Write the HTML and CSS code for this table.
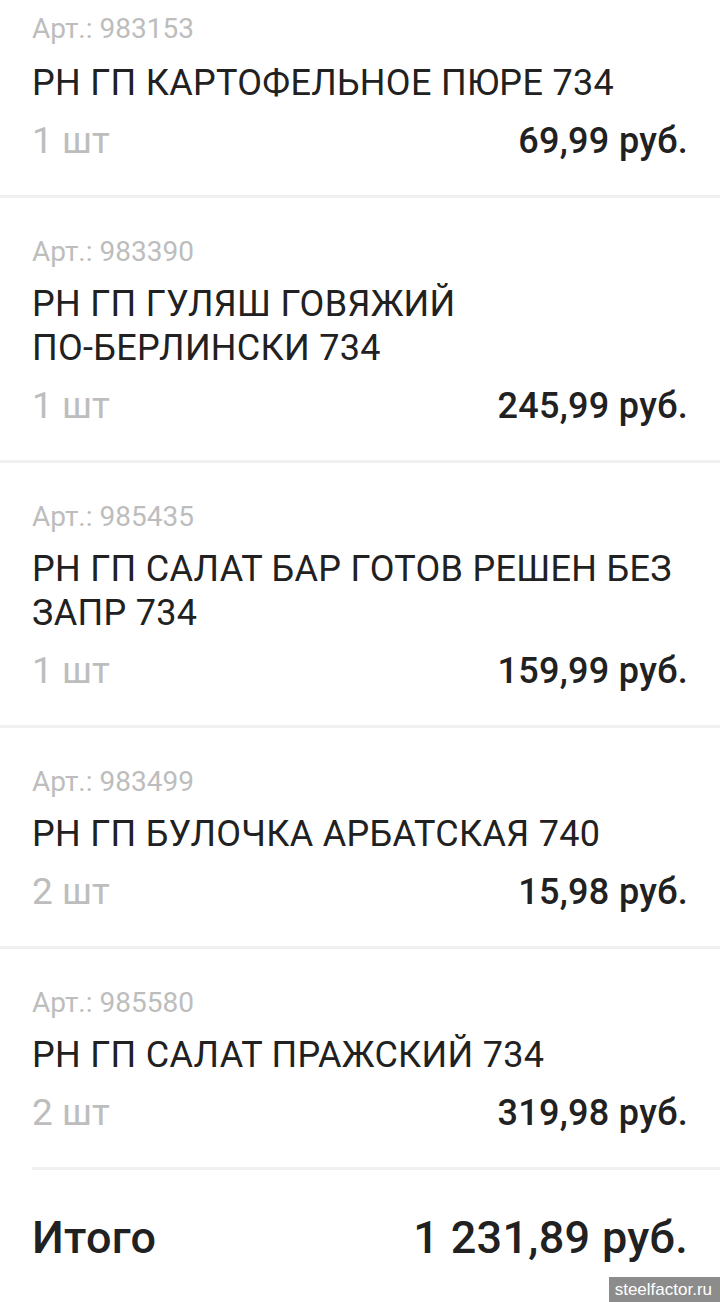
FILE: index.html
```html
<!DOCTYPE html>
<html lang="ru">
<head>
<meta charset="utf-8">
<title>Чек</title>
<link rel="stylesheet" href="styles.css">
</head>
<body>
<div class="list">
  <div class="item">
    <div class="art">Арт.: 983153</div>
    <div class="name">РН ГП КАРТОФЕЛЬНОЕ ПЮРЕ 734</div>
    <div class="row"><span class="qty">1 шт</span><span class="price">69,99 руб.</span></div>
  </div>
  <div class="item">
    <div class="art">Арт.: 983390</div>
    <div class="name">РН ГП ГУЛЯШ ГОВЯЖИЙ<br>ПО-БЕРЛИНСКИ 734</div>
    <div class="row"><span class="qty">1 шт</span><span class="price">245,99 руб.</span></div>
  </div>
  <div class="item">
    <div class="art">Арт.: 985435</div>
    <div class="name">РН ГП САЛАТ БАР ГОТОВ РЕШЕН БЕЗ<br>ЗАПР 734</div>
    <div class="row"><span class="qty">1 шт</span><span class="price">159,99 руб.</span></div>
  </div>
  <div class="item">
    <div class="art">Арт.: 983499</div>
    <div class="name">РН ГП БУЛОЧКА АРБАТСКАЯ 740</div>
    <div class="row"><span class="qty">2 шт</span><span class="price">15,98 руб.</span></div>
  </div>
  <div class="item item-last">
    <div class="art">Арт.: 985580</div>
    <div class="name">РН ГП САЛАТ ПРАЖСКИЙ 734</div>
    <div class="row"><span class="qty">2 шт</span><span class="price">319,98 руб.</span></div>
  </div>
  <div class="total">
    <span>Итого</span><span>1 231,89 руб.</span>
  </div>
</div>
<div class="watermark">steelfactor.ru</div>
</body>
</html>
```

FILE: styles.css
```css
html, body {
  margin: 0;
  padding: 0;
  background: #ffffff;
}
body {
  font-family: Roboto, "Noto Sans", sans-serif;
  color: #212121;
  width: 720px;
  height: 1302px;
  overflow: hidden;
  position: relative;
}
.list {
  margin-top: -23px;
}
.item {
  padding: 38px 32px 32px 32px;
  border-bottom: 3px solid #f0f0f0;
}
.item:first-child {
  padding-top: 36px;
}
.item-last {
  margin-left: 32px;
  padding-left: 0;
}
.art {
  font-size: 28px;
  line-height: 32px;
  color: #bdbdbd;
}
.name {
  margin-top: 14px;
  font-size: 36px;
  line-height: 44px;
  letter-spacing: 0.3px;
  color: #212121;
}
.item:first-child .name {
  margin-top: 16px;
}
.row {
  margin-top: 14px;
  display: flex;
  justify-content: space-between;
  align-items: baseline;
  line-height: 44px;
}
.qty {
  font-size: 37px;
  color: #bdbdbd;
}
.price {
  font-size: 36px;
  font-weight: 500;
  letter-spacing: 0.3px;
  color: #212121;
}
.total {
  display: flex;
  justify-content: space-between;
  align-items: baseline;
  padding: 43px 32px 0 32px;
  font-size: 45px;
  line-height: 50px;
  font-weight: 500;
  letter-spacing: 0.3px;
  color: #212121;
}
.watermark {
  position: absolute;
  right: 0;
  bottom: 0;
  background: #8c8c8c;
  color: #ffffff;
  font-family: "Liberation Sans", Arial, sans-serif;
  font-size: 17px;
  line-height: 25px;
  padding: 0 8px 0 6px;
}
```
